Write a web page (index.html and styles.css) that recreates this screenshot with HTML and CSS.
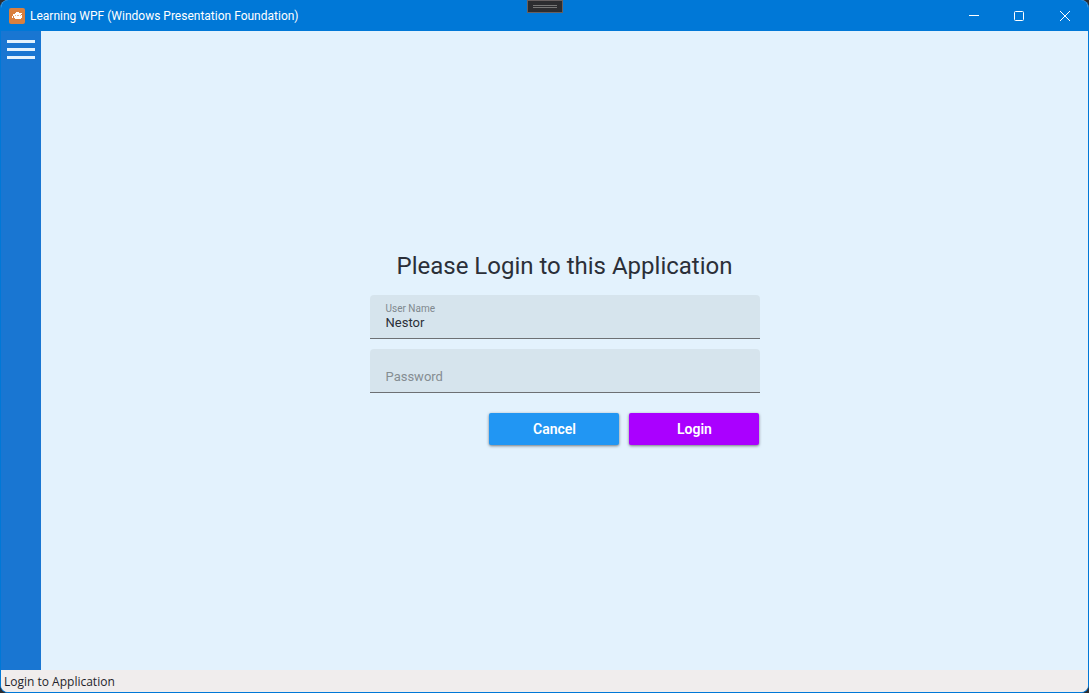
FILE: index.html
```html
<!DOCTYPE html>
<html lang="en">
<head>
<meta charset="utf-8">
<title>Learning WPF (Windows Presentation Foundation)</title>
<link rel="stylesheet" href="styles.css">
</head>
<body>
<div class="window">
  <header class="titlebar">
    <svg class="app-icon" width="16" height="16" viewBox="0 0 16 16" aria-hidden="true">
      <rect width="16" height="16" rx="2" fill="#d9803f"/>
      <path fill="#fff" d="M7 4h3v1h3v1h-1v1h1v3h-1v1H6v-1H5V8H4V6h2V5h1zM3 8h1v2H3z"/>
      <path fill="#e9b48c" d="M6 7h1v1H6zM8 7h2v1H8zM11 7h1v1h-1z"/>
    </svg>
    <span class="title">Learning WPF (Windows Presentation Foundation)</span>
    <div class="controls">
      <button class="control" type="button" aria-label="Minimize">
        <svg width="12" height="10" viewBox="0 0 12 10"><path d="M2 4.500h10"/></svg>
      </button>
      <button class="control" type="button" aria-label="Maximize">
        <svg width="10" height="10" viewBox="0 0 10 10"><rect x=".5" y=".5" width="9" height="9" rx="1"/></svg>
      </button>
      <button class="control" type="button" aria-label="Close">
        <svg width="10" height="10" viewBox="0 0 10 10"><path d="M0 0l10 10M10 0L0 10"/></svg>
      </button>
    </div>
    <button class="debug-handle" type="button" aria-label="Debug toolbar"><span class="grip"></span></button>
  </header>
  <div class="body">
    <nav class="sidebar">
      <button class="menu" type="button" aria-label="Menu">
        <svg width="28" height="19" viewBox="0 0 28 19"><path d="M0 0h28v3H0zM0 8h28v3H0zM0 16h28v3H0z"/></svg>
      </button>
    </nav>
    <main class="content">
      <form class="login">
        <h1 class="heading">Please Login to this Application</h1>
        <div class="field">
          <label class="label" for="user">User Name</label>
          <input class="input" id="user" type="text" value="Nestor">
        </div>
        <div class="field">
          <input class="input" id="password" type="password" placeholder="Password" aria-label="Password">
        </div>
        <div class="actions">
          <button class="button cancel" type="button">Cancel</button>
          <button class="button submit" type="submit">Login</button>
        </div>
      </form>
    </main>
  </div>
  <footer class="status">Login to Application</footer>
</div>
</body>
</html>
```
FILE: styles.css
```css
* { box-sizing: border-box; }

body {
  margin: 0;
  background: #2d2d30;
  font-family: Roboto, sans-serif;
}

button {
  border: 0;
  padding: 0;
  font-family: inherit;
}

.window {
  display: flex;
  flex-direction: column;
  height: 100vh;
  overflow: hidden;
  border: 1px solid #0078d7;
  border-top: 0;
  border-radius: 8px;
  background: #e3f2fd;
}

.titlebar {
  position: relative;
  display: flex;
  align-items: center;
  gap: 5px;
  height: 31px;
  padding-left: 8px;
  background: #0078d7;
  color: #fff;
}

.title { font-size: 12px; }

.controls {
  display: flex;
  height: 100%;
  margin-left: auto;
}

.control {
  display: flex;
  align-items: center;
  justify-content: center;
  width: 46px;
  background: transparent;
}

.control svg {
  fill: none;
  stroke: #fff;
}

.debug-handle {
  position: absolute;
  top: 0;
  left: calc(50% - 18px);
  display: flex;
  align-items: center;
  justify-content: center;
  width: 36px;
  height: 13px;
  border: 1px solid #686060;
  background: #2d2d30;
}

.grip {
  width: 24px;
  height: 3px;
  border: solid #777;
  border-width: 1px 0;
}

.body {
  display: flex;
  flex: 1;
}

.sidebar {
  width: 40px;
  background: #1976d2;
}

.menu {
  display: flex;
  padding: 9px 6px;
  background: transparent;
}

.menu svg { fill: #e3f2fd; }

.content {
  display: flex;
  flex: 1;
  align-items: center;
  justify-content: center;
}

.login {
  display: flex;
  flex-direction: column;
  gap: 10px;
  width: 390px;
  padding-bottom: 5px;
}

.heading {
  margin: 0 0 4px;
  color: #2b2f38;
  font-size: 24px;
  font-weight: 400;
  line-height: 30px;
  text-align: center;
}

.field {
  display: flex;
  flex-direction: column;
  justify-content: flex-end;
  height: 44px;
  padding: 0 16px 8px;
  border-bottom: 1px solid #6d7074;
  border-radius: 4px 4px 0 0;
  background: #d6e4ed;
}

.label {
  color: #7f888e;
  font-size: 10px;
  line-height: 10px;
}

.input {
  width: 100%;
  height: 16px;
  padding: 0;
  border: 0;
  outline: 0;
  background: transparent;
  color: #2b2f38;
  font-family: inherit;
  font-size: 13px;
}

.input::placeholder {
  color: #858d92;
  opacity: 1;
}

.actions {
  display: flex;
  justify-content: flex-end;
  gap: 10px;
  padding: 10px 1px 0 0;
}

.button {
  width: 130px;
  height: 32px;
  padding-left: 2px;
  border-radius: 2px;
  box-shadow: 0 1px 3px rgba(0, 0, 0, 0.5);
  color: #fff;
  font-size: 14px;
  font-weight: 600;
}

.cancel { background: #2196f3; }

.submit { background: #aa00ff; }

.status {
  height: 22px;
  padding-left: 3px;
  background: #f0eded;
  color: #1f1f2b;
  font-family: "Open Sans", sans-serif;
  font-size: 12px;
  line-height: 24px;
}
```
